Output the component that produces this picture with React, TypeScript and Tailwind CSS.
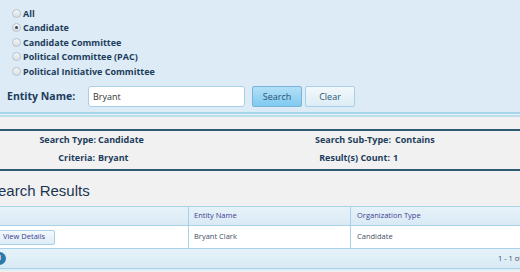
import React from "react";

const types = [
  { label: "All", checked: false },
  { label: "Candidate", checked: true },
  { label: "Candidate Committee", checked: false },
  { label: "Political Committee (PAC)", checked: false },
  { label: "Political Initiative Committee", checked: false },
];

const Radio = ({ checked }: { checked: boolean }) => (
  <span className="w-[9px] h-[9px] rounded-full border border-[#b9c3cb] bg-gradient-to-b from-[#f4f6f8] to-[#d9dfe4] flex items-center justify-center">
    {checked && <span className="w-[3px] h-[3px] rounded-full bg-[#3c4650]" />}
  </span>
);

export default function App() {
  return (
    <div className="w-[520px] h-[272px] overflow-hidden bg-[#f1f1f1] font-['Open_Sans',sans-serif] text-[#1d3d5c]">
      {/* search form */}
      <div className="h-[112px] bg-[#dcebf5] pt-[6px] pl-[7px]">
        <div className="flex flex-col pl-[5px]">
          {types.map((t) => (
            <label key={t.label} className="h-[14.5px] flex items-center gap-[2px] text-[9px] font-bold whitespace-nowrap">
              <Radio checked={t.checked} />
              <span>{t.label}</span>
            </label>
          ))}
        </div>
        <div className="mt-[7.5px] flex items-center">
          <span className="w-[81px] text-[10.5px] font-bold whitespace-nowrap">Entity Name:</span>
          <div className="w-[157px] h-[21px] bg-white border border-[#a9cfe6] rounded-[3px] flex items-center pl-[4px] text-[9px] text-[#333]">
            Bryant
          </div>
          <button className="ml-[7px] w-[50px] h-[21px] rounded-[2px] border border-[#77b3da] bg-gradient-to-b from-[#b3e0f7] to-[#7fcaf0] text-[9px] text-[#2a5575]">
            Search
          </button>
          <button className="ml-[3px] w-[50px] h-[21px] rounded-[2px] border border-[#a9cfe6] bg-gradient-to-b from-[#f2f8fb] to-[#ddedf6] text-[9px] text-[#2a5575]">
            Clear
          </button>
        </div>
      </div>
      <div className="h-[2px] bg-[#a7d5ec]" />
      <div className="h-[1px] bg-[#e6f2f8]" />
      <div className="h-[2px] bg-[#bcdff0]" />
      <div className="h-[12px]" />

      {/* summary */}
      <div className="h-[42px] border-y-2 border-[#2f5a74] text-[9px] font-bold whitespace-nowrap">
        <div className="h-[18px] flex items-center">
          <span className="w-[96px] shrink-0 text-right">Search Type:</span>
          <span className="ml-[2px] w-[150px] shrink-0">Candidate</span>
          <span className="w-[143px] shrink-0 text-right">Search Sub-Type:</span>
          <span className="ml-[4px]">Contains</span>
        </div>
        <div className="h-[17px] flex items-center">
          <span className="w-[95px] shrink-0 text-right">Criteria:</span>
          <span className="ml-[3px] w-[150px] shrink-0">Bryant</span>
          <span className="w-[142px] shrink-0 text-right">Result(s) Count:</span>
          <span className="ml-[3px]">1</span>
        </div>
      </div>

      {/* results */}
      <div className="-ml-[12px] w-[600px]">
        <div className="h-[35px] pt-[5px] flex items-center font-['Liberation_Sans',sans-serif] text-[15px] text-[#1b3550]">
          Search Results
        </div>
        <div className="border-t border-[#a8d2e8] bg-gradient-to-b from-[#e7f2f9] to-[#d9eaf5] h-[19px] flex text-[7.5px] text-[#3e3d92]">
          <div className="w-[201px] border-r border-[#a8d2e8]" />
          <div className="w-[162px] border-r border-[#a8d2e8] pl-[5px] flex items-center">Entity Name</div>
          <div className="flex-1 pl-[6px] flex items-center">Organization Type</div>
        </div>
        <div className="border-t border-[#a8d2e8] bg-white h-[23px] flex text-[7.5px] text-[#3f5062]">
          <div className="w-[201px] border-r border-[#a8d2e8] pl-[5px] flex items-center">
            <button className="h-[15px] px-[9px] rounded-[2px] border border-[#a9cfe6] bg-gradient-to-b from-[#f4f9fc] to-[#dcecf6] text-[#3e3d92] text-[7.5px]">
              View Details
            </button>
          </div>
          <div className="w-[162px] border-r border-[#a8d2e8] pl-[5px] flex items-center">Bryant Clark</div>
          <div className="flex-1 pl-[6px] flex items-center">Candidate</div>
        </div>
        <div className="border-y border-[#a8d2e8] bg-gradient-to-b from-[#e6f2f9] to-[#d8eaf5] h-[21px] flex items-center text-[7.5px] text-[#3f5062]">
          <span className="ml-[5px] w-[13px] h-[13px] rounded-full bg-[#2a7bab] text-white flex items-center justify-center text-[7px] font-bold">
            1
          </span>
          <span className="ml-[492px] whitespace-nowrap">1 - 1 of 1 items</span>
        </div>
        <div className="h-[2px] bg-[#e2eef5]" />
      </div>
    </div>
  );
}
